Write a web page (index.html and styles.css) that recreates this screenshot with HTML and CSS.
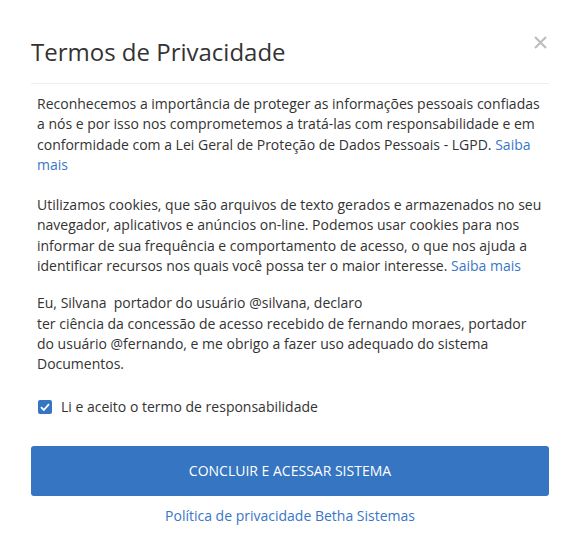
FILE: index.html
```html
<!DOCTYPE html>
<html lang="pt-BR">
<head>
    <meta charset="UTF-8">
    <meta name="viewport" content="width=device-width, initial-scale=1.0">
    <title>Termos de Privacidade</title>
    <link rel="stylesheet" href="styles.css">
</head>
<body>
    <div class="modal">
        <div class="modal-header">
            <h1>Termos de Privacidade</h1>
            <button class="close" type="button" aria-label="Fechar">
                <svg width="13" height="13" viewBox="0 0 13 13"><path d="M1 1 L12 12 M12 1 L1 12" stroke="#bdbdbd" stroke-width="2.2"/></svg>
            </button>
        </div>

        <div class="modal-body">
            <p>Reconhecemos a importância de proteger as informações pessoais confiadas a nós e por isso nos comprometemos a tratá-las com responsabilidade e em conformidade com a Lei Geral de Proteção de Dados Pessoais - LGPD. <a href="#">Saiba mais</a></p>

            <p class="cookies">Utilizamos cookies, que são arquivos de texto gerados e armazenados no seu navegador, aplicativos e anúncios on-line. Podemos usar cookies para nos informar de sua frequência e comportamento de acesso, o que nos ajuda a identificar recursos nos quais você possa ter o maior interesse. <a href="#">Saiba mais</a></p>

            <p>Eu, Silvana&nbsp; portador do usuário @silvana, declaro<br>
            ter ciência da concessão de acesso recebido de fernando moraes, portador do usuário @fernando, e me obrigo a fazer uso adequado do sistema Documentos.</p>

            <label class="check">
                <span class="box">
                    <svg width="10" height="8" viewBox="0 0 10 8"><path d="M1 4.2 L3.8 7 L9 1.2" fill="none" stroke="#fff" stroke-width="1.8"/></svg>
                </span>
                Li e aceito o termo de responsabilidade
            </label>
        </div>

        <div class="modal-footer">
            <button class="btn-primary" type="button">CONCLUIR E ACESSAR SISTEMA</button>
            <a class="policy" href="#">Política de privacidade Betha Sistemas</a>
        </div>
    </div>
</body>
</html>
```

FILE: styles.css
```css
body {
    margin: 0;
    background: #fff;
    font-family: "Open Sans", "Liberation Sans", sans-serif;
    color: #333;
}
.modal {
    padding: 0 39px 0 31px;
}
.modal-header {
    display: flex;
    justify-content: space-between;
    align-items: flex-start;
    padding-top: 35px;
    padding-bottom: 14px;
    border-bottom: 1px solid #eee;
}
.modal-header h1 {
    margin: 0;
    font-size: 24px;
    font-weight: 400;
    line-height: 34px;
    color: #333;
}
.close {
    display: flex;
    margin: 1px 2px 0 0;
    padding: 0;
    border: 0;
    background: none;
    cursor: pointer;
}
.modal-body {
    padding: 10px 6px 0;
    font-size: 14px;
    line-height: 20.3px;
}
.modal-body p {
    margin: 0 0 20px;
}
.modal-body p.cookies {
    margin-bottom: 17px;
}
a {
    color: #3a76c7;
    text-decoration: none;
}
.check {
    display: flex;
    align-items: center;
    gap: 9px;
    margin-top: 22px;
    margin-left: 1px;
}
.box {
    display: inline-flex;
    align-items: center;
    justify-content: center;
    width: 14px;
    height: 14px;
    border-radius: 2px;
    background: #3575c2;
}
.modal-footer {
    padding-top: 29px;
    text-align: center;
}
.btn-primary {
    display: block;
    width: 100%;
    height: 50px;
    border: 0;
    border-radius: 3px;
    background: #3575c2;
    color: #fff;
    font-family: "Open Sans", "Liberation Sans", sans-serif;
    font-size: 14px;
}
.policy {
    display: inline-block;
    margin-top: 10px;
    font-size: 14px;
    line-height: 20px;
}
```
